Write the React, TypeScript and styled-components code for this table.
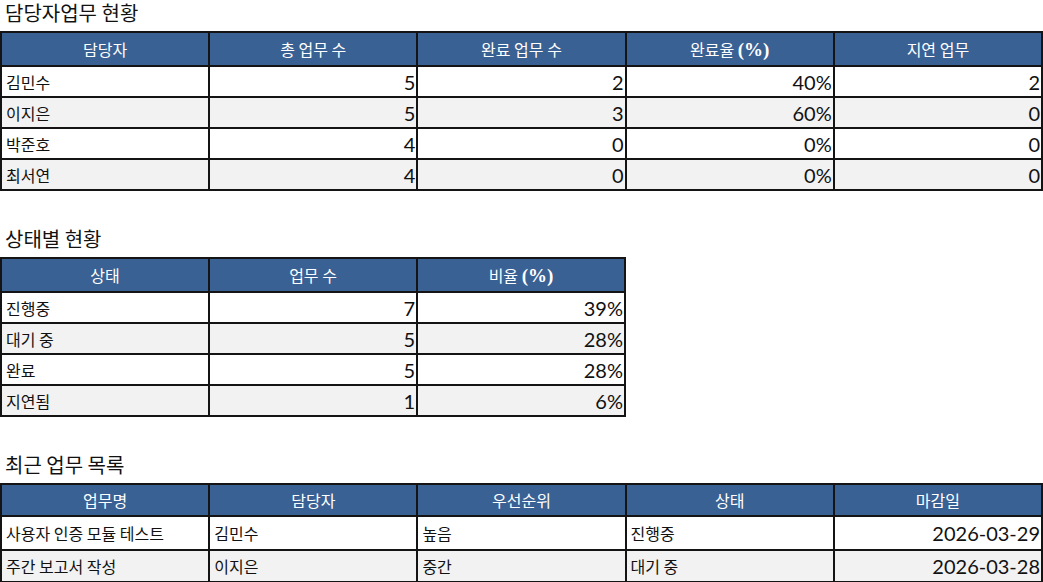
import React from "react";
import styled, { createGlobalStyle } from "styled-components";

const Global = createGlobalStyle`
  html, body { margin: 0; padding: 0; background: #ffffff; }
  body { font-family: "Lato", "Noto Sans CJK KR", sans-serif; color: #000; }
`;

const Page = styled.div`
  width: 1043px;
  display: flex;
  flex-direction: column;
`;

const Section = styled.section`
  display: flex;
  flex-direction: column;
  & + & { margin-top: 35px; }
`;

const Title = styled.h2`
  margin: 0;
  height: 31px;
  box-sizing: border-box;
  padding: 0 0 0 5px;
  font: 400 20px/25px "Noto Sans CJK KR", sans-serif;
  color: #111;
`;

const Table = styled.table<{ $width: number }>`
  width: ${(p) => p.$width}px;
  border-collapse: collapse;
  table-layout: fixed;
`;

const HeadRow = styled.tr<{ $h: number }>`
  height: ${(p) => p.$h}px;
  background: #3a6193;
`;

const BodyRow = styled.tr<{ $h: number; $alt: boolean }>`
  height: ${(p) => p.$h}px;
  background: ${(p) => (p.$alt ? "#f2f2f2" : "#ffffff")};
`;

const HeadCell = styled.th`
  border: 2px solid #141414;
  padding: 0;
  color: #ffffff;
  text-align: center;
  font: 400 16px/20px "Noto Sans CJK KR", sans-serif;
  white-space: nowrap;
  overflow: hidden;
`;

const Pct = styled.span`
  font: 700 19px/20px "Liberation Serif", serif;
`;

const TextCell = styled.td`
  border: 2px solid #141414;
  padding: 0 0 0 4px;
  text-align: left;
  font: 400 16px/20px "Noto Sans CJK KR", sans-serif;
  white-space: nowrap;
  overflow: hidden;
  color: #111;
`;

const NumCell = styled.td`
  border: 2px solid #141414;
  padding: 0 1px 0 0;
  text-align: right;
  font: 400 20px/22px "Lato", sans-serif;
  white-space: nowrap;
  color: #111;
`;

type Cell = { v: string; num?: boolean };

function Header({ cols, h }: { cols: string[]; h: number }) {
  return (
    <HeadRow $h={h}>
      {cols.map((c) => {
        const m = c.match(/^(.*) \(%\)$/);
        return (
          <HeadCell key={c}>
            {m ? (
              <>
                {m[1]} <Pct>(%)</Pct>
              </>
            ) : (
              c
            )}
          </HeadCell>
        );
      })}
    </HeadRow>
  );
}

function Rows({ rows, h }: { rows: Cell[][]; h: number[] }) {
  return (
    <>
      {rows.map((r, i) => (
        <BodyRow key={i} $h={h[i]} $alt={i % 2 === 1}>
          {r.map((c, j) =>
            c.num ? <NumCell key={j}>{c.v}</NumCell> : <TextCell key={j}>{c.v}</TextCell>
          )}
        </BodyRow>
      ))}
    </>
  );
}

const t = (v: string): Cell => ({ v });
const n = (v: string): Cell => ({ v, num: true });

const members: Cell[][] = [
  [t("김민수"), n("5"), n("2"), n("40%"), n("2")],
  [t("이지은"), n("5"), n("3"), n("60%"), n("0")],
  [t("박준호"), n("4"), n("0"), n("0%"), n("0")],
  [t("최서연"), n("4"), n("0"), n("0%"), n("0")],
];

const statuses: Cell[][] = [
  [t("진행중"), n("7"), n("39%")],
  [t("대기 중"), n("5"), n("28%")],
  [t("완료"), n("5"), n("28%")],
  [t("지연됨"), n("1"), n("6%")],
];

const recent: Cell[][] = [
  [t("사용자 인증 모듈 테스트"), t("김민수"), t("높음"), t("진행중"), n("2026-03-29")],
  [t("주간 보고서 작성"), t("이지은"), t("중간"), t("대기 중"), n("2026-03-28")],
];

export default function App() {
  return (
    <Page>
      <Global />
      <Section>
        <Title>담당자업무 현황</Title>
        <Table $width={1043}>
          <tbody>
            <Header cols={["담당자", "총 업무 수", "완료 업무 수", "완료율 (%)", "지연 업무"]} h={34} />
            <Rows rows={members} h={[31, 31, 31, 31]} />
          </tbody>
        </Table>
      </Section>
      <Section>
        <Title>상태별 현황</Title>
        <Table $width={626}>
          <tbody>
            <Header cols={["상태", "업무 수", "비율 (%)"]} h={34} />
            <Rows rows={statuses} h={[31, 31, 31, 31]} />
          </tbody>
        </Table>
      </Section>
      <Section>
        <Title>최근 업무 목록</Title>
        <Table $width={1043}>
          <tbody>
            <Header cols={["업무명", "담당자", "우선순위", "상태", "마감일"]} h={32} />
            <Rows rows={recent} h={[34, 32]} />
          </tbody>
        </Table>
      </Section>
    </Page>
  );
}
